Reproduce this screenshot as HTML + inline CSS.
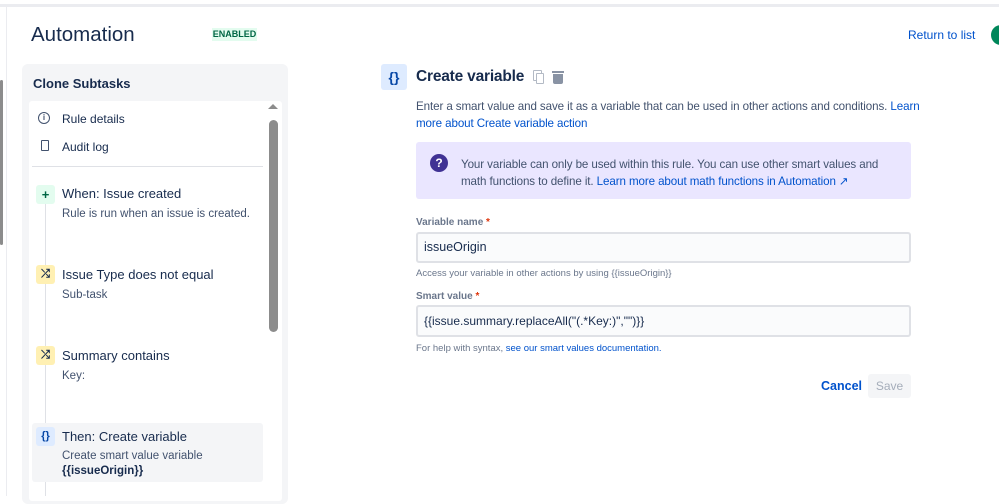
<!DOCTYPE html>
<html><head><meta charset="utf-8"><style>
*{box-sizing:border-box;margin:0;padding:0}
body{width:999px;height:496px;overflow:hidden;background:#fff;font-family:"Liberation Sans",sans-serif;color:#172b4d;position:relative}
.a{position:absolute}
.blue{color:#0052cc}
.ic{position:absolute;width:19px;height:19px;border-radius:3px;font-size:11px;font-weight:bold;text-align:center;line-height:19px}
.t{position:absolute;left:62px;font-size:13px;color:#172b4d}
.s{position:absolute;left:62px;font-size:11.5px;color:#42526e}
</style></head><body>
<div class="a" style="left:0;top:4px;width:999px;height:3px;background:#ebecf0"></div>
<div class="a" style="left:6px;top:7px;width:1px;height:489px;background:#ebecf0"></div>
<div class="a" style="left:0;top:80px;width:3px;height:165px;background:#8c8c8c;border-radius:2px"></div>
<div class="a" style="left:31px;top:23px;font-size:20.5px;color:#172b4d">Automation</div>
<div class="a" style="left:212px;top:28px;width:45px;height:13px;background:#e3fcef;color:#006644;font-size:9px;font-weight:bold;text-align:center;line-height:13px">ENABLED</div>
<div class="a blue" style="left:908px;top:28px;font-size:12px">Return to list</div>
<div class="a" style="left:991px;top:25px;width:20px;height:20px;border-radius:50%;background:#00875a"></div>

<div class="a" style="left:22px;top:64px;width:266px;height:440px;background:#f4f5f7;border-radius:6px"></div>
<div class="a" style="left:33px;top:76px;font-size:13px;font-weight:bold">Clone Subtasks</div>
<div class="a" style="left:29px;top:101px;width:253px;height:400px;background:#fff;border-radius:3px"></div>
<div class="a" style="left:268px;top:104px;width:0;height:0;border-left:5px solid transparent;border-right:5px solid transparent;border-bottom:5px solid #8c8c8c"></div>
<div class="a" style="left:269px;top:120px;width:9px;height:212px;background:#8c8c8c;border-radius:5px"></div>
<div class="a" style="left:38px;top:112px;width:12px;height:12px;border:1.5px solid #42526e;border-radius:50%;font-size:8px;text-align:center;line-height:9px;color:#42526e;font-weight:bold">i</div>
<div class="t" style="top:112px;font-size:12px">Rule details</div>
<div class="a" style="left:41px;top:140px;width:8px;height:11px;border:1.5px solid #42526e;border-radius:1px"></div>
<div class="t" style="top:140px;font-size:12px">Audit log</div>
<div class="a" style="left:32px;top:166px;width:231px;height:1px;background:#dfe1e6"></div>
<div class="a" style="left:45px;top:203px;width:1px;height:293px;background:#dfe1e6"></div>

<div class="ic" style="left:36px;top:185px;background:#e3fcef;color:#006644;font-size:13px">+</div>
<div class="t" style="top:186px">When: Issue created</div>
<div class="s" style="top:208px">Rule is run when an issue is created.</div>

<div class="ic" style="left:36px;top:265px;background:#fff0b3;color:#172b4d">⤮</div>
<div class="t" style="top:267px">Issue Type does not equal</div>
<div class="s" style="top:289px">Sub-task</div>

<div class="ic" style="left:36px;top:346px;background:#fff0b3;color:#172b4d">⤮</div>
<div class="t" style="top:348px">Summary contains</div>
<div class="s" style="top:370px">Key:</div>

<div class="a" style="left:32px;top:423px;width:231px;height:59px;background:#f4f5f7;border-radius:3px"></div>
<div class="ic" style="left:36px;top:427px;background:#deebff;color:#0747a6">{}</div>
<div class="t" style="top:429px">Then: Create variable</div>
<div class="s" style="top:450px">Create smart value variable</div>
<div class="s" style="top:465px;font-weight:bold;color:#172b4d">{{issueOrigin}}</div>

<div class="a" style="left:381px;top:64px;width:26px;height:26px;background:#deebff;border-radius:3px;color:#0747a6;font-weight:bold;font-size:14px;text-align:center;line-height:26px">{}</div>
<div class="a" style="left:416px;top:68px;font-size:15.5px;font-weight:bold;color:#172b4d;letter-spacing:-0.2px">Create variable</div>
<div class="a" style="left:533px;top:70px;width:9px;height:11px;border:1.5px solid #b3bac5;border-radius:1px"></div>
<div class="a" style="left:536px;top:73px;width:8px;height:11px;border:1.5px solid #b3bac5;background:#fff;border-radius:1px"></div>
<div class="a" style="left:552px;top:71px;width:12px;height:2px;background:#8993a4"></div>
<div class="a" style="left:553px;top:74px;width:10px;height:10px;background:#8993a4;border-radius:0 0 2px 2px"></div>
<div class="a" style="left:416px;top:98px;font-size:11.6px;line-height:17px;color:#42526e;white-space:nowrap;letter-spacing:-0.1px">Enter a smart value and save it as a variable that can be used in other actions and conditions. <span class="blue">Learn</span><br><span class="blue">more about Create variable action</span></div>
<div class="a" style="left:416px;top:142px;width:495px;height:57px;background:#eae6ff;border-radius:3px"></div>
<div class="a" style="left:430px;top:154px;width:18px;height:18px;border-radius:50%;background:#403294;color:#fff;font-size:12px;font-weight:bold;text-align:center;line-height:18px">?</div>
<div class="a" style="left:461px;top:156px;font-size:11.6px;line-height:17px;color:#42526e;white-space:nowrap;letter-spacing:-0.1px">Your variable can only be used within this rule. You can use other smart values and<br>math functions to define it. <span class="blue">Learn more about math functions in Automation ↗</span></div>

<div class="a" style="left:416px;top:217px;font-size:10px;font-weight:bold;color:#6b778c">Variable name <span style="color:#de350b">*</span></div>
<div class="a" style="left:416px;top:232px;width:495px;height:31px;background:#fafbfc;border:2px solid #dfe1e6;border-radius:3px;font-size:12.5px;padding:6px 6px;color:#172b4d">issueOrigin</div>
<div class="a" style="left:416px;top:268px;font-size:9.5px;color:#6b778c">Access your variable in other actions by using {{issueOrigin}}</div>
<div class="a" style="left:416px;top:291px;font-size:10px;font-weight:bold;color:#6b778c">Smart value <span style="color:#de350b">*</span></div>
<div class="a" style="left:416px;top:305px;width:495px;height:32px;background:#fafbfc;border:2px solid #dfe1e6;border-radius:3px;font-size:12px;padding:7px 6px;color:#172b4d">{{issue.summary.replaceAll("(.*Key:)","")}}</div>
<div class="a" style="left:416px;top:343px;font-size:9.5px;color:#6b778c">For help with syntax, <span class="blue">see our smart values documentation.</span></div>
<div class="a blue" style="left:821px;top:379px;font-size:12.5px;font-weight:bold">Cancel</div>
<div class="a" style="left:868px;top:374px;width:43px;height:24px;background:#f4f5f7;border-radius:3px;color:#a5adba;font-size:12px;text-align:center;line-height:24px">Save</div>
</body></html>
